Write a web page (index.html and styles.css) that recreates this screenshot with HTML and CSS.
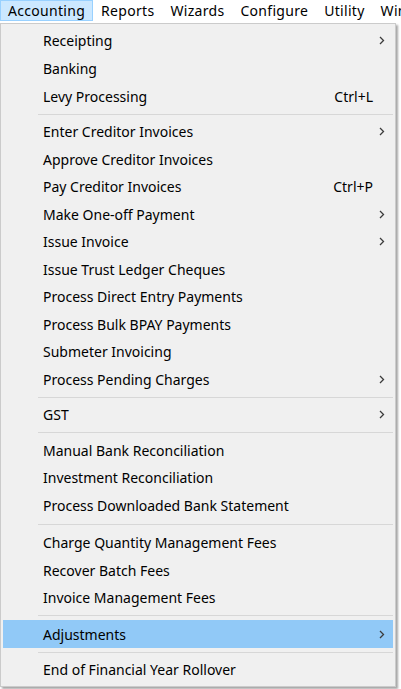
FILE: index.html
```html
<!DOCTYPE html>
<html>
<head>
<meta charset="utf-8">
<link rel="stylesheet" href="styles.css">
</head>
<body>
<div class="menubar">
  <span class="top active">Accounting</span>
  <span class="top">Reports</span>
  <span class="top">Wizards</span>
  <span class="top">Configure</span>
  <span class="top">Utility</span>
  <span class="top">Window</span>
</div>
<div class="menu">
  <div class="item r28"><span class="label">Receipting</span><span class="key"></span><span class="arrow"><svg width="6" height="9" viewBox="0 0 6 9"><polyline points="1,1 4.5,4.5 1,8" fill="none" stroke="#3c3c3c" stroke-width="1.3"/></svg></span></div>
  <div class="item r28"><span class="label">Banking</span><span class="key"></span><span class="arrow"></span></div>
  <div class="item r28"><span class="label">Levy Processing</span><span class="key">Ctrl+L</span><span class="arrow"></span></div>
  <div class="sep"></div>
  <div class="item"><span class="label">Enter Creditor Invoices</span><span class="key"></span><span class="arrow"><svg width="6" height="9" viewBox="0 0 6 9"><polyline points="1,1 4.5,4.5 1,8" fill="none" stroke="#3c3c3c" stroke-width="1.3"/></svg></span></div>
  <div class="item"><span class="label">Approve Creditor Invoices</span><span class="key"></span><span class="arrow"></span></div>
  <div class="item"><span class="label">Pay Creditor Invoices</span><span class="key">Ctrl+P</span><span class="arrow"></span></div>
  <div class="item"><span class="label">Make One-off Payment</span><span class="key"></span><span class="arrow"><svg width="6" height="9" viewBox="0 0 6 9"><polyline points="1,1 4.5,4.5 1,8" fill="none" stroke="#3c3c3c" stroke-width="1.3"/></svg></span></div>
  <div class="item"><span class="label">Issue Invoice</span><span class="key"></span><span class="arrow"><svg width="6" height="9" viewBox="0 0 6 9"><polyline points="1,1 4.5,4.5 1,8" fill="none" stroke="#3c3c3c" stroke-width="1.3"/></svg></span></div>
  <div class="item"><span class="label">Issue Trust Ledger Cheques</span><span class="key"></span><span class="arrow"></span></div>
  <div class="item"><span class="label">Process Direct Entry Payments</span><span class="key"></span><span class="arrow"></span></div>
  <div class="item"><span class="label">Process Bulk BPAY Payments</span><span class="key"></span><span class="arrow"></span></div>
  <div class="item"><span class="label">Submeter Invoicing</span><span class="key"></span><span class="arrow"></span></div>
  <div class="item"><span class="label">Process Pending Charges</span><span class="key"></span><span class="arrow"><svg width="6" height="9" viewBox="0 0 6 9"><polyline points="1,1 4.5,4.5 1,8" fill="none" stroke="#3c3c3c" stroke-width="1.3"/></svg></span></div>
  <div class="sep"></div>
  <div class="item"><span class="label">GST</span><span class="key"></span><span class="arrow"><svg width="6" height="9" viewBox="0 0 6 9"><polyline points="1,1 4.5,4.5 1,8" fill="none" stroke="#3c3c3c" stroke-width="1.3"/></svg></span></div>
  <div class="sep"></div>
  <div class="item"><span class="label">Manual Bank Reconciliation</span><span class="key"></span><span class="arrow"></span></div>
  <div class="item"><span class="label">Investment Reconciliation</span><span class="key"></span><span class="arrow"></span></div>
  <div class="item"><span class="label">Process Downloaded Bank Statement</span><span class="key"></span><span class="arrow"></span></div>
  <div class="sep sep-tall"></div>
  <div class="item"><span class="label">Charge Quantity Management Fees</span><span class="key"></span><span class="arrow"></span></div>
  <div class="item"><span class="label">Recover Batch Fees</span><span class="key"></span><span class="arrow"></span></div>
  <div class="item"><span class="label">Invoice Management Fees</span><span class="key"></span><span class="arrow"></span></div>
  <div class="sep sep-mid"></div>
  <div class="item r28 hover"><span class="label">Adjustments</span><span class="key"></span><span class="arrow"><svg width="6" height="9" viewBox="0 0 6 9"><polyline points="1,1 4.5,4.5 1,8" fill="none" stroke="#3c3c3c" stroke-width="1.3"/></svg></span></div>
  <div class="sep"></div>
  <div class="item"><span class="label">End of Financial Year Rollover</span><span class="key"></span><span class="arrow"></span></div>
</div>
</body>
</html>
```
FILE: styles.css
```css
html, body {
  margin: 0;
  padding: 0;
  background: #ffffff;
  width: 401px;
  height: 689px;
  overflow: hidden;
  font-family: "Noto Sans", "Open Sans", sans-serif;
  color: #000;
}

.menubar {
  display: flex;
  height: 22px;
  white-space: nowrap;
  font-size: 14px;
  letter-spacing: 0.3px;
  overflow: hidden;
}

.top {
  box-sizing: border-box;
  height: 21px;
  line-height: 19px;
  padding: 0 7px;
  border: 1px solid transparent;
}

.top.active {
  background: #cce8ff;
  border-color: #99d1ff;
}

.menu {
  box-sizing: border-box;
  width: 396px;
  margin-top: 1px;
  background: #f0f0f0;
  border: 1px solid #cbcbcb;
  padding: 2px;
  box-shadow: 2px 2px 2px rgba(0, 0, 0, 0.35);
  font-size: 14px;
}

.item {
  display: grid;
  grid-template-columns: 1fr auto 20px;
  align-items: center;
  height: 27.5px;
  padding-left: 40px;
  white-space: nowrap;
}

.item.r28 {
  height: 28px;
}

.item.hover {
  background: #91c9f7;
}

.key {
  text-align: right;
}

.arrow {
  display: flex;
  align-items: center;
  justify-content: center;
  padding-right: 2px;
}

.arrow svg {
  display: block;
}

.sep {
  height: 8px;
  display: flex;
  align-items: center;
  padding-left: 35px;
}

.sep::after {
  content: "";
  display: block;
  flex: 1;
  height: 1px;
  background: #d7d7d7;
}

.sep-tall {
  height: 10px;
}

.sep-mid {
  height: 8.5px;
}
```
